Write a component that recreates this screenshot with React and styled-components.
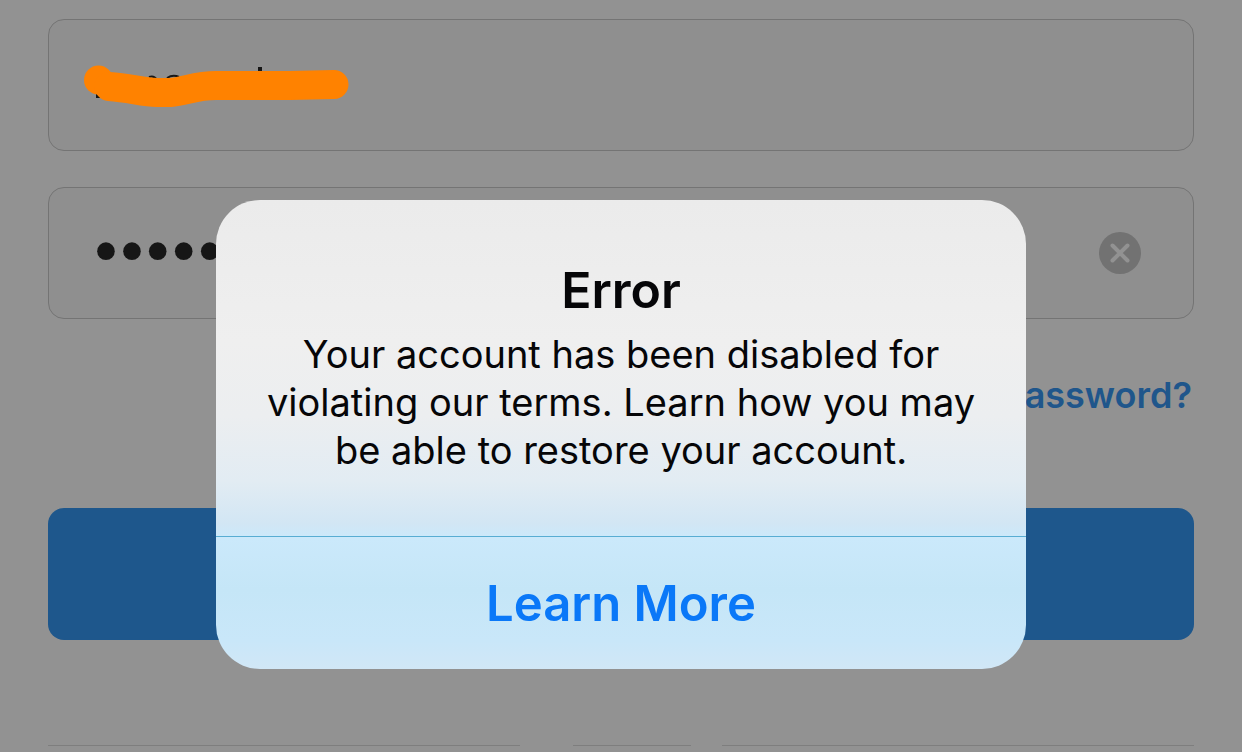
import { useState } from 'react'
import styled, { createGlobalStyle } from 'styled-components'

const GlobalStyle = createGlobalStyle`
*{
  box-sizing:border-box;
}
body{
  margin:0;
  background-color:#929292;
  font-family:Inter, 'Liberation Sans', sans-serif;
}
button, input{
  font-family:inherit;
}
`

const Page = styled.div`
position:relative;
height:100vh;
overflow:hidden;
`

const Form = styled.form`
display:flex;
flex-direction:column;
padding:19px 48px 0px;
`

const Field = styled.div`
position:relative;
display:flex;
align-items:center;
height:132px;
margin-bottom:36px;
padding:0px 52px 0px 44px;
border:1px solid #747474;
border-radius:16px;
background-color:#8f8f8f;
`

const Input = styled.input`
flex:1;
min-width:0;
padding:0px;
border:none;
outline:none;
background-color:transparent;
color:#161616;
font-size:38px;
`

const PasswordInput = styled(Input)`
padding-bottom:4px;
font-family:'Liberation Serif', serif;
font-size:74px;
`

const Scribble = styled.svg`
position:absolute;
left:31px;
top:40px;
`

const ClearButton = styled.button`
display:flex;
padding:0px;
border:none;
border-radius:50%;
background-color:transparent;
cursor:pointer;
`

const ForgotLink = styled.a`
align-self:flex-end;
margin:16px 2px 89px;
color:#1f568b;
font-size:36px;
font-weight:600;
line-height:48px;
text-decoration:none;
`

const LoginButton = styled.button`
height:132px;
border:none;
border-radius:16px;
background-color:#1e578c;
cursor:pointer;
`

const Divider = styled.div`
display:flex;
margin:105px 48px 0px;
`

const Line = styled.div`
flex:4;
height:1px;
background-color:#7e7e7e;
`

const ShortLine = styled(Line)`
flex:1;
margin:0px 31px 0px 53px;
`

const Overlay = styled.div`
position:absolute;
inset:0px;
display:flex;
justify-content:center;
align-items:flex-start;
padding:200px 24px 0px;
`

const Dialog = styled.div`
width:100%;
max-width:810px;
border-radius:44px;
overflow:hidden;
background-image:linear-gradient(#ebebeb, #efefef 30%, #eceef0 46%, #e2ecf3 60%, #d2e6f4 69%, #cbe9fb 72%, #c5e6f7 83%, #c9e7f9 94%, #d1e7f6);
color:#060608;
text-align:center;
`

const Message = styled.div`
padding:60px 32px 62px;
border-bottom:1px solid #58add3;
`

const Title = styled.h1`
margin:0px 0px 10px;
font-size:50px;
font-weight:600;
line-height:60px;
`

const Text = styled.p`
margin:0px;
font-size:38px;
line-height:48px;
`

const ActionButton = styled.button`
width:100%;
height:132px;
padding:0px;
border:none;
background-color:transparent;
color:#0a78f8;
font-size:49px;
font-weight:600;
cursor:pointer;
`

const App = () => {
  const [username, setUsername] = useState('')
  const [password, setPassword] = useState('password')

  return (
    <Page>
      <GlobalStyle/>
      <Form onSubmit={e => e.preventDefault()}>
        <Field>
          <Input type='text' aria-label='Username' value={username} onChange={e => setUsername(e.target.value)}/>
          <Scribble width='276' height='56' viewBox='80 60 276 56' aria-hidden='true'>
            <path d='M258 67h4v5h-4zM96 93h4v5h-4z' fill='#161616'/>
            <path d='M149 77q5 -2 8 3M167 78q6 -4 12 -1M335 97q5 0 9 -5' fill='none' stroke='#161616' strokeWidth='2'/>
            <circle cx='98.500' cy='80' r='14.500' fill='#ff8200'/>
            <path d='M109 86.500C130 88 142 92 157 92.500H170C186 91 196 85.500 216 85.500H290L334 84.500' fill='none' stroke='#ff8200' strokeWidth='29' strokeLinecap='round' strokeLinejoin='round'/>
          </Scribble>
        </Field>
        <Field>
          <PasswordInput type='password' aria-label='Password' value={password} onChange={e => setPassword(e.target.value)}/>
          <ClearButton type='button' aria-label='Clear password' onClick={() => setPassword('')}>
            <svg width='42' height='42' viewBox='0 0 42 42'>
              <circle cx='21' cy='21' r='21' fill='#727272'/>
              <path d='M13.500 13.500L28.500 28.500M28.500 13.500L13.500 28.500' stroke='#929292' strokeWidth='4' strokeLinecap='round'/>
            </svg>
          </ClearButton>
        </Field>
        <ForgotLink href='#'>Forgot password?</ForgotLink>
        <LoginButton type='submit' aria-label='Log In'/>
      </Form>
      <Divider>
        <Line/>
        <ShortLine/>
        <Line/>
      </Divider>
      <Overlay>
        <Dialog role='alertdialog' aria-labelledby='title' aria-describedby='text'>
          <Message>
            <Title id='title'>Error</Title>
            <Text id='text'>Your account has been disabled for violating our terms. Learn how you may be able to restore your account.</Text>
          </Message>
          <ActionButton type='button'>Learn More</ActionButton>
        </Dialog>
      </Overlay>
    </Page>
  )
}

export default App
